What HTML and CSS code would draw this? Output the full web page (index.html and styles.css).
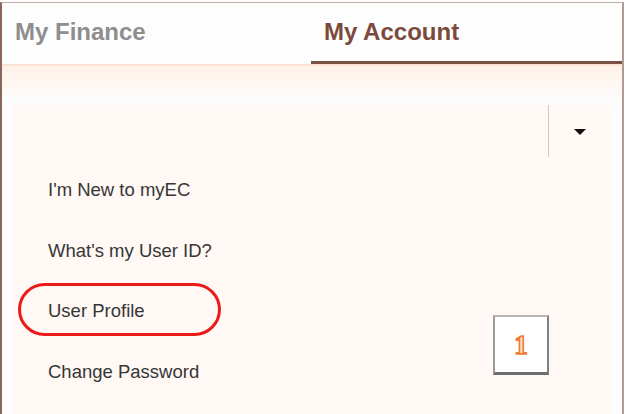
FILE: index.html
```html
<!DOCTYPE html>
<html>
<head>
<meta charset="utf-8">
<link rel="stylesheet" href="styles.css">
</head>
<body>
<div class="frame">
  <div class="tabs">
    <div class="tab">My Finance</div>
    <div class="tab active">My Account</div>
  </div>
  <div class="content">
    <div class="panel">
      <div class="select-row">
        <div class="select-btn"><span class="caret"></span></div>
      </div>
      <ul class="menu">
        <li class="menu-item">I'm New to myEC</li>
        <li class="menu-item">What's my User ID?</li>
        <li class="menu-item highlight">User Profile</li>
        <li class="menu-item">Change Password</li>
      </ul>
      <div class="step-badge">1</div>
    </div>
  </div>
</div>
</body>
</html>
```

FILE: styles.css
```css
html, body {
  margin: 0;
  padding: 0;
  background: #ffffff;
  height: 100%;
  overflow: hidden;
}

.frame {
  margin-top: 2px;
  width: 620px;
  height: 411px;
  border-top: 1px solid #c4aaa0;
  border-left: 2px solid #8a665a;
  border-right: 2px solid #b39a92;
  background: #fcfcfc;
  font-family: "Liberation Sans", Arial, Helvetica, sans-serif;
  overflow: hidden;
}

.tabs {
  display: grid;
  grid-template-columns: 309px 1fr;
  background: #fdfdfd;
}

.tab {
  height: 58px;
  line-height: 58px;
  padding-left: 13px;
  font-size: 24px;
  font-weight: bold;
  color: #8e8e8e;
  border-bottom: 3px solid transparent;
}

.tab.active {
  color: #7b4a3b;
  border-bottom-color: #7a5245;
}

.content {
  box-sizing: border-box;
  padding-top: 41px;
  height: 350px;
  background: linear-gradient(#fcdcc8 0, #fef1e8 3px, #fff6f0 12px, #fff7f2 22px, #fdfbfa 30px, #fcfcfc 41px);
}

.panel {
  position: relative;
  margin-left: 11px;
  width: 597px;
  height: 309px;
  background: #fff8f4;
}

.select-row {
  height: 55px;
  display: flex;
  justify-content: flex-end;
}

.select-btn {
  width: 61px;
  height: 52px;
  border-left: 1px solid #c9c9c9;
  display: flex;
  align-items: center;
  justify-content: center;
}

.caret {
  width: 0;
  height: 0;
  border-left: 6px solid transparent;
  border-right: 6px solid transparent;
  border-top: 6px solid #111111;
  margin-top: 1px;
}

.menu {
  list-style: none;
  margin: 0;
  padding: 0;
}

.menu-item {
  position: relative;
  height: 60.5px;
  line-height: 60.5px;
  padding-left: 35px;
  font-size: 18.5px;
  color: #363636;
}

.menu-item.highlight::before {
  content: "";
  position: absolute;
  left: 5px;
  top: 2px;
  width: 197px;
  height: 47px;
  border: 3.5px solid #eb1a1a;
  border-radius: 27px;
}

.step-badge {
  position: absolute;
  left: 480px;
  top: 210px;
  width: 52px;
  height: 53px;
  box-sizing: content-box;
  background: #ffffff;
  border-top: 2px solid #b5b5b5;
  border-left: 2px solid #9c9c9c;
  border-right: 2px solid #808080;
  border-bottom: 3px solid #6f6f6f;
  display: flex;
  align-items: center;
  justify-content: center;
  font-family: "Liberation Serif", "Times New Roman", serif;
  font-weight: bold;
  font-size: 27px;
  color: #fde2cc;
  -webkit-text-stroke: 1.6px #f07a30;
  padding-top: 2px;
}
```
